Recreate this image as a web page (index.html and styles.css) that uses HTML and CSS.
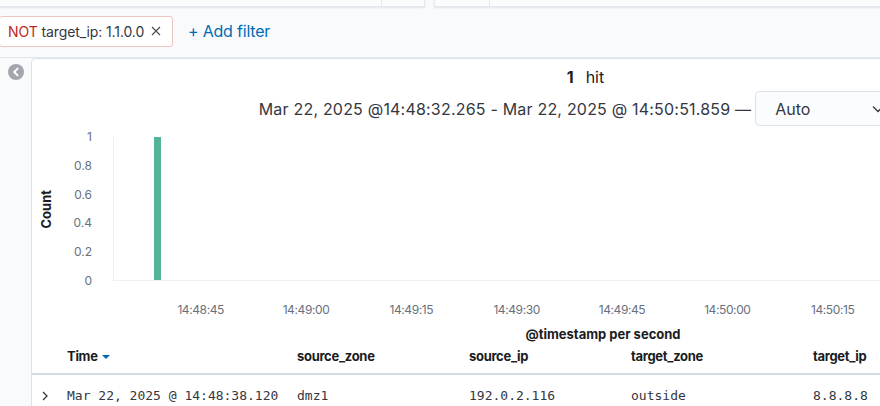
FILE: index.html
```html
<!DOCTYPE html>
<html>
<head>
<meta charset="utf-8">
<link rel="stylesheet" href="styles.css">
</head>
<body>
<div class="topbar">
  <div class="tb-box tb-a"><div class="tb-seg tb-a1"></div><div class="tb-seg tb-a2"></div></div>
  <div class="tb-box tb-b"><div class="tb-seg tb-b1"></div><div class="tb-seg tb-b2"></div></div>
</div>
<div class="filterbar">
  <div class="pill"><span class="not">NOT</span>&nbsp;target_ip: 1.1.0.0<svg class="x" width="10" height="10" viewBox="0 0 10 10"><path d="M1 1 L9 9 M9 1 L1 9" stroke="#4a4f58" stroke-width="1.2"/></svg></div>
  <div class="addfilter">+ Add filter</div>
</div>
<div class="main">
  <div class="gutter">
    <div class="collapse"><svg width="16" height="16" viewBox="0 0 16 16"><circle cx="8" cy="8" r="8" fill="#a2a6ad"/><path d="M9.6 4.6 L6.2 8 L9.6 11.4" fill="none" stroke="#fff" stroke-width="2" stroke-linecap="round" stroke-linejoin="round"/></svg></div>
  </div>
  <div class="panel">
    <div class="hits"><strong>1</strong><span class="hitw">hit</span></div>
    <div class="daterow">
      <span class="range">Mar 22, 2025 @14:48:32.265 - Mar 22, 2025 @ 14:50:51.859 —</span>
      <div class="select"><span>Auto</span><svg width="12" height="12" viewBox="0 0 12 12"><path d="M1 3.5 L6 8.5 L11 3.5" fill="none" stroke="#343741" stroke-width="1.3"/></svg></div>
    </div>
    <div class="chart">
      <div class="count-col"><span class="count">Count</span></div>
      <div class="yaxis"><span>1</span><span>0.8</span><span>0.6</span><span>0.4</span><span>0.2</span><span>0</span></div>
      <div class="plot"><div class="bar"></div></div>
    </div>
    <div class="xaxis">
      <span>14:48:45</span><span>14:49:00</span><span>14:49:15</span><span>14:49:30</span><span>14:49:45</span><span>14:50:00</span><span>14:50:15</span>
    </div>
    <div class="xtitle">@timestamp per second</div>
    <div class="thead">
      <div class="c0"></div>
      <div class="c1">Time <svg class="sort" width="8" height="6" viewBox="0 0 8 6"><path d="M0 1 L8 1 L4 5 Z" fill="#006bb4"/></svg></div>
      <div class="c2">source_zone</div>
      <div class="c3">source_ip</div>
      <div class="c4">target_zone</div>
      <div class="c5">target_ip</div>
    </div>
    <div class="trow">
      <div class="c0"><svg width="8" height="12" viewBox="0 0 8 12"><path d="M2 2 L6 6 L2 10" fill="none" stroke="#343741" stroke-width="1.3"/></svg></div>
      <div class="c1">Mar 22, 2025 @ 14:48:38.120</div>
      <div class="c2">dmz1</div>
      <div class="c3">192.0.2.116</div>
      <div class="c4">outside</div>
      <div class="c5">8.8.8.8</div>
    </div>
  </div>
</div>
</body>
</html>
```

FILE: styles.css
```css
* { box-sizing: border-box; }
html, body { margin: 0; padding: 0; }
body {
  width: 880px;
  height: 406px;
  overflow: hidden;
  background: #f9fafc;
  font-family: Inter, "Noto Sans", sans-serif;
  color: #343741;
}
.topbar {
  display: flex;
  gap: 9px;
  height: 7px;
}
.tb-box {
  display: flex;
  height: 7px;
  background: #fbfcfd;
  border: 1px solid #e3e7ee;
  border-top: none;
  box-shadow: 0 1px 2px rgba(152,162,179,0.25);
}
.tb-a { width: 426px; margin-left: -1px; }
.tb-b { flex: 1; margin-right: -2px; }
.tb-seg { height: 100%; }
.tb-a1 { width: 382px; border-right: 1px solid #e3e7ee; }
.tb-b1 { width: 55px; border-right: 1px solid #e3e7ee; }
.filterbar {
  display: flex;
  align-items: center;
  height: 51px;
  padding-bottom: 2px;
  border-bottom: 1px solid #e3e7ef;
}
.pill {
  margin-left: -1px;
  height: 31px;
  width: 174px;
  display: flex;
  align-items: center;
  padding-left: 8px;
  background: #fff;
  border: 1px solid #efc5c1;
  border-radius: 3px;
  font-size: 14px;
  color: #343741;
  letter-spacing: -0.1px;
}
.not { color: #bd271e; }
.x { margin-left: 7px; }
.addfilter {
  margin-left: 15px;
  font-size: 16px;
  color: #006bb4;
  letter-spacing: -0.2px;
}
.main { display: flex; }
.gutter { width: 31px; flex: none; padding: 6px 0 0 8px; }
.collapse { width: 16px; height: 16px; }
.collapse svg { display: block; }
.panel {
  flex: none;
  width: 1140px;
  height: 360px;
  background: #fff;
  border-left: 1px solid #dde2ea;
  border-top: 1px solid #dde2ea;
  border-top-left-radius: 5px;
  padding-top: 8px;
}
.hits {
  width: 1107px;
  text-align: center;
  font-size: 16px;
  line-height: 20px;
  color: #1a1c21;
}
.hits strong { font-weight: 700; }
.hitw { margin-left: 12px; }
.daterow {
  width: 1107px;
  margin-top: 4px;
  display: flex;
  justify-content: center;
  align-items: center;
  gap: 4px;
}
.range {
  font-size: 16px;
  color: #343741;
  letter-spacing: 0.2px;
  white-space: nowrap;
}
.select {
  width: 157px;
  height: 35px;
  display: flex;
  align-items: center;
  padding: 0 27px 0 19px;
  background: #fbfcfd;
  border: 1px solid #dde2ea;
  border-radius: 4px;
  font-size: 16px;
  color: #343741;
}
.select svg { margin-left: auto; }
.chart {
  display: flex;
  margin-top: 11px;
}
.count-col {
  width: 28px;
  height: 144px;
  display: flex;
  align-items: center;
  justify-content: center;
}
.count {
  writing-mode: vertical-rl;
  transform: rotate(180deg);
  font-size: 13px;
  font-weight: 700;
  color: #1a1c21;
}
.yaxis {
  width: 32px;
  height: 158px;
  margin-top: -7px;
  display: flex;
  flex-direction: column;
  justify-content: space-between;
  align-items: flex-end;
  font-size: 12px;
  line-height: 14px;
  color: #69707d;
}
.plot {
  margin-left: 21px;
  width: 980px;
  height: 144px;
  border-left: 1px solid #eef0f3;
  border-bottom: 1px solid #eef0f3;
}
.bar {
  margin-left: 40px;
  width: 7px;
  height: 100%;
  background: #54b399;
}
.xaxis {
  display: flex;
  margin-top: 15px;
  padding-left: 116px;
  font-size: 12px;
  line-height: 14px;
  color: #69707d;
  letter-spacing: -0.4px;
}
.xaxis span { width: 105.33px; flex: none; text-align: center; }
.xtitle {
  margin-left: 81px;
  width: 980px;
  margin-top: 9px;
  text-align: center;
  font-size: 13px;
  font-weight: 700;
  line-height: 16px;
  color: #1a1c21;
}
.thead, .trow { display: flex; }
.thead {
  padding-top: 4px;
  height: 33px;
  border-bottom: 2px solid #d3dae6;
  font-size: 13px;
  font-weight: 700;
  line-height: 20px;
  color: #1a1c21;
  letter-spacing: -0.3px;
}
.trow {
  padding-top: 11px;
  font-family: "DejaVu Sans Mono", monospace;
  font-size: 13px;
  line-height: 20px;
  color: #343741;
}
.c0 { width: 35px; flex: none; padding-left: 9px; display: flex; align-items: center; }
.c1 { width: 230px; flex: none; }
.c2 { width: 172px; flex: none; }
.c3 { width: 162px; flex: none; }
.c4 { width: 182px; flex: none; }
.c5 { flex: none; }
.sort { margin-left: 2px; vertical-align: middle; }
```
